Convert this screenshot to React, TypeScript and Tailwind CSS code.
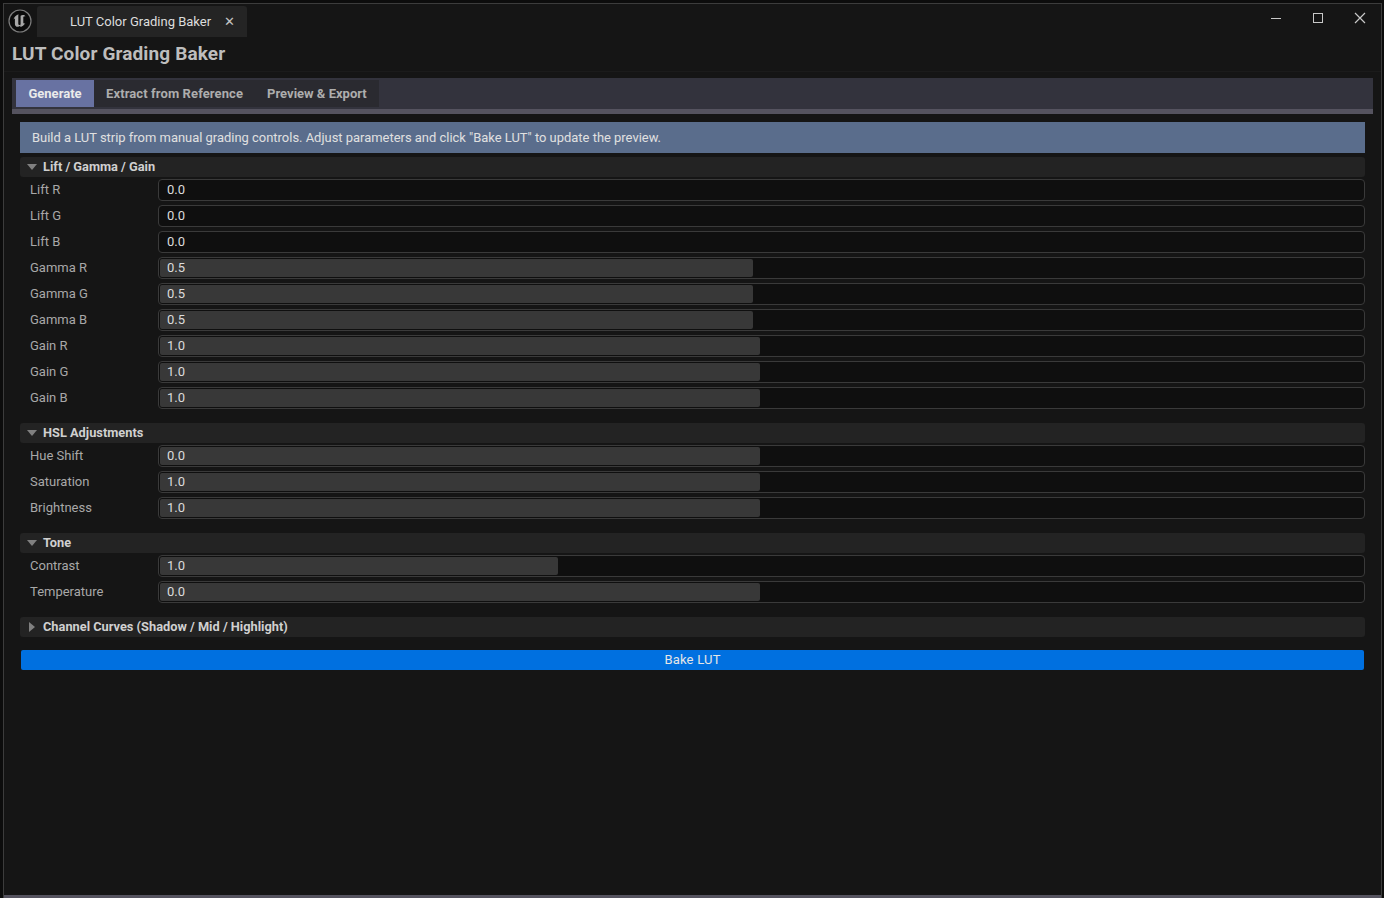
import { ReactNode } from "react";

interface Row {
    label: string;
    value: string;
    fill?: number; // width of the slider fill in px
}

const liftRows: Row[] = [
    { label: "Lift R", value: "0.0" },
    { label: "Lift G", value: "0.0" },
    { label: "Lift B", value: "0.0" },
    { label: "Gamma R", value: "0.5", fill: 593 },
    { label: "Gamma G", value: "0.5", fill: 593 },
    { label: "Gamma B", value: "0.5", fill: 593 },
    { label: "Gain R", value: "1.0", fill: 600 },
    { label: "Gain G", value: "1.0", fill: 600 },
    { label: "Gain B", value: "1.0", fill: 600 },
];

const hslRows: Row[] = [
    { label: "Hue Shift", value: "0.0", fill: 600 },
    { label: "Saturation", value: "1.0", fill: 600 },
    { label: "Brightness", value: "1.0", fill: 600 },
];

const toneRows: Row[] = [
    { label: "Contrast", value: "1.0", fill: 398 },
    { label: "Temperature", value: "0.0", fill: 600 },
];

const EngineLogo = () => (
    <svg width="24" height="24" viewBox="0 0 24 24" className="shrink-0">
        <circle cx="12" cy="12" r="11" fill="#0b0b0b" stroke="#7c7c7c" strokeWidth="1.2" />
        <path
            d="M10.500 5.200C7.700 6.300 5.800 8.400 5.600 10.500c.4-.6.9-.9 1.300-.9v5.300c0 1.800 1.200 2.900 2.700 2.900 1 0 1.900-.5 2.700-1.400l.1 1.500c1.800-.4 3.600-1.700 4.900-3.700-.6.4-1.300.5-1.700.1-.3-.3-.3-.7-.3-1.200V7.800c.8-.6 1.500-.7 2.200-.4-1-1.500-3.200-1.800-4.900-.6v8.600c-.5.5-1.100.7-1.600.5-.5-.2-.7-.6-.7-1.100V7.300c0-.9.100-1.500.200-2.100z"
            fill="#a8a8a8"
        />
    </svg>
);

const Section = ({ title, open = true, children }: { title: string; open?: boolean; children?: ReactNode }) => (
    <div className="flex flex-col">
        <div className="flex h-5 items-center rounded-[3px] bg-[#232323] pl-[7px] text-[12.8px] font-bold text-[#d0d0d0]">
            {open ? (
                <span className="h-0 w-0 border-x-[5px] border-t-[6px] border-x-transparent border-t-[#808080]" />
            ) : (
                <span className="ml-[2px] mr-[2px] h-0 w-0 border-y-[5px] border-l-[6px] border-y-transparent border-l-[#808080]" />
            )}
            <span className="ml-[6px]">{title}</span>
        </div>
        {children && <div className="mt-[2px] flex flex-col gap-1">{children}</div>}
    </div>
);

const FieldRow = ({ label, value, fill }: Row) => (
    <div className="flex h-[22px] items-center">
        <span className="w-[138px] pl-[10px] text-[13px] text-[#a8a8a8]">{label}</span>
        <div className="relative h-[22px] flex-1 rounded-[4px] border border-[#3a3a3a] bg-[#0f0f0f]">
            {fill && (
                <div
                    className="absolute left-px top-px h-[18px] rounded-[2px] bg-[#383838]"
                    style={{ width: fill }}
                />
            )}
            <span className="absolute left-2 top-0 text-[13px] leading-5 text-[#dcdcdc]">{value}</span>
        </div>
    </div>
);

export default function App() {
    return (
        <div className="h-[898px] w-[1384px] overflow-hidden bg-[#0c0c0c] pl-[3px] pr-[2px] pt-[3px] font-['Roboto',sans-serif]">
            <div className="flex h-[895px] flex-col border-l border-r border-t border-[#3c3c3c] bg-[#151515]">
                {/* title bar */}
                <div className="flex h-[33px] shrink-0 items-end">
                    <div className="mb-[4px] ml-[4px] mr-[5px]">
                        <EngineLogo />
                    </div>
                    <div className="flex h-[31px] w-[210px] items-center rounded-t-[3px] bg-[#242424] pl-[33px] text-[13px] text-[#dddddd]">
                        <span>LUT Color Grading Baker</span>
                        <span className="ml-[13px] text-[13px] leading-none text-[#c4c4c4]">✕</span>
                    </div>
                    <div className="ml-auto flex h-full items-start pt-[8px] text-[#c8c8c8]">
                        <svg width="12" height="12" viewBox="0 0 12 12" className="mr-[30px]">
                            <path d="M1 6.500h10" stroke="currentColor" strokeWidth="1" />
                        </svg>
                        <svg width="12" height="12" viewBox="0 0 12 12" className="mr-[30px]">
                            <rect x="1.500" y="1.500" width="9" height="9" fill="none" stroke="currentColor" strokeWidth="1" />
                        </svg>
                        <svg width="12" height="12" viewBox="0 0 12 12" className="mr-[15px]">
                            <path d="M1 1l10 10M11 1L1 11" stroke="currentColor" strokeWidth="1.200" />
                        </svg>
                    </div>
                </div>

                {/* window heading */}
                <div className="h-[35px] shrink-0 border-b border-[#1b1b1b] pl-2 pt-[4px] text-[19px] font-bold leading-[26px] tracking-[0.13px] text-[#bdbdbd]">
                    LUT Color Grading Baker
                </div>

                {/* tabs */}
                <div className="ml-2 mr-2 mt-[6px] flex h-9 shrink-0 flex-col bg-[#33333d]">
                    <div className="flex h-[27px] pl-1 pt-[2px] text-[13px] font-bold">
                        <div className="flex h-[27px] w-[78px] items-center justify-center bg-[#6872a2] text-[#ebebeb]">Generate</div>
                        <div className="flex h-[27px] w-[285px] items-center bg-[#2a2a30] text-[#adadad]">
                            <span className="px-3 tracking-[0.1px]">Extract from Reference</span>
                            <span className="px-3">Preview &amp; Export</span>
                        </div>
                    </div>
                    <div className="mt-auto h-[5px] bg-[#55535f]" />
                </div>

                {/* body */}
                <div className="ml-4 mr-4 mt-2 flex flex-1 flex-col">
                    <div className="flex h-[31px] items-center bg-[#5a6d8c] pl-3 text-[12.940px] text-[#e0e0e0]">
                        Build a LUT strip from manual grading controls. Adjust parameters and click "Bake LUT" to update the preview.
                    </div>
                    <div className="mt-1 flex flex-col gap-[6px]">
                        <Section title="Lift / Gamma / Gain">
                            {liftRows.map((r) => (
                                <FieldRow key={r.label} {...r} />
                            ))}
                        </Section>
                        <div className="mt-[8px]">
                            <Section title="HSL Adjustments">
                                {hslRows.map((r) => (
                                    <FieldRow key={r.label} {...r} />
                                ))}
                            </Section>
                        </div>
                        <div className="mt-[8px]">
                            <Section title="Tone">
                                {toneRows.map((r) => (
                                    <FieldRow key={r.label} {...r} />
                                ))}
                            </Section>
                        </div>
                        <div className="mt-[8px]">
                            <Section title="Channel Curves (Shadow / Mid / Highlight)" open={false} />
                        </div>
                    </div>
                    <div className="mx-px mt-[13px] flex h-5 items-center justify-center rounded-[2px] bg-[#0070e0] text-[13px] tracking-[0.2px] text-[#e6e6e6]">
                        Bake LUT
                    </div>
                </div>

                {/* bottom edge */}
                <div className="h-[3px] shrink-0 bg-[#55535f]" />
            </div>
        </div>
    );
}
